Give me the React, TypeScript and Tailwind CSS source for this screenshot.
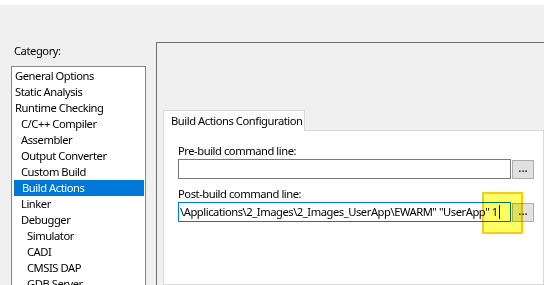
import React from "react";

const categories: { label: string; level: number }[] = [
  { label: "General Options", level: 0 },
  { label: "Static Analysis", level: 0 },
  { label: "Runtime Checking", level: 0 },
  { label: "C/C++ Compiler", level: 1 },
  { label: "Assembler", level: 1 },
  { label: "Output Converter", level: 1 },
  { label: "Custom Build", level: 1 },
  { label: "Build Actions", level: 1 },
  { label: "Linker", level: 1 },
  { label: "Debugger", level: 1 },
  { label: "Simulator", level: 2 },
  { label: "CADI", level: 2 },
  { label: "CMSIS DAP", level: 2 },
  { label: "GDB Server", level: 2 },
];

const indent = ["pl-[2px]", "pl-[8px]", "pl-[14px]"];

function BrowseButton() {
  return (
    <button className="h-[19px] w-[22px] shrink-0 border border-[#adadad] bg-[#e1e1e1] text-[12px] leading-[14px] pb-[3px] tracking-normal">
      ...
    </button>
  );
}

export default function App() {
  return (
    <div className="w-[544px] h-[285px] overflow-hidden bg-[#f0f0f0] text-black text-[11.2px] tracking-[-0.45px] font-['Noto_Sans',sans-serif] flex flex-col">
      <div className="h-[5px] bg-white shrink-0" />
      <div className="flex flex-1 min-h-0">
        {/* Category list */}
        <div className="w-[146px] shrink-0 pl-[11px] flex flex-col">
          <div className="shrink-0 pt-[38px] pl-[3px] h-[61px] leading-[16px]">Category:</div>
          <div className="flex-1 w-[135px] border border-[#828790] bg-white p-[1px]">
            {categories.map((c) => (
              <div
                key={c.label}
                className={`h-[16px] leading-[16px] whitespace-nowrap ${indent[c.level]} ${
                  c.label === "Build Actions" ? "bg-[#0078d7] text-white ml-[1px]" : ""
                }`}
              >
                {c.label}
              </div>
            ))}
          </div>
        </div>

        {/* Options panel */}
        <div className="ml-[10px] mt-[37px] flex-1 border-l border-t border-[#707070] pl-[6px] pt-[67px] flex flex-col">
          <div className="flex">
            <div className="h-[21px] w-[142px] border border-b-0 border-[#d9d9d9] bg-white pl-[7px] leading-[19px] whitespace-nowrap -mb-px relative">
              Build Actions Configuration
            </div>
          </div>
          <div className="flex-1 border border-[#d9d9d9] bg-white pl-[14px] pt-[12px]">
            <div className="leading-[16px] whitespace-nowrap">Pre-build command line:</div>
            <div className="flex items-center gap-[1px]">
              <div className="h-[20px] w-[333px] border border-[#7a7a7a] bg-white" />
              <BrowseButton />
            </div>
            <div className="leading-[16px] whitespace-nowrap mt-[7px]">Post-build command line:</div>
            <div className="relative flex items-center gap-[1px]">
              <div className="h-[20px] w-[333px] border border-[#0078d7] bg-white overflow-hidden flex items-center pl-[1px]">
                <span className="whitespace-nowrap leading-[16px]">
                  \Applications\2_Images\2_Images_UserApp\EWARM" "UserApp" 1
                </span>
                <span className="ml-[1px] h-[14px] w-px bg-black shrink-0" />
              </div>
              <BrowseButton />
              <div className="absolute left-[304px] top-[-10px] h-[42px] w-[41px] border-2 border-[#f7c600] bg-[#ffff50] mix-blend-multiply opacity-90" />
            </div>
          </div>
        </div>
      </div>
    </div>
  );
}
